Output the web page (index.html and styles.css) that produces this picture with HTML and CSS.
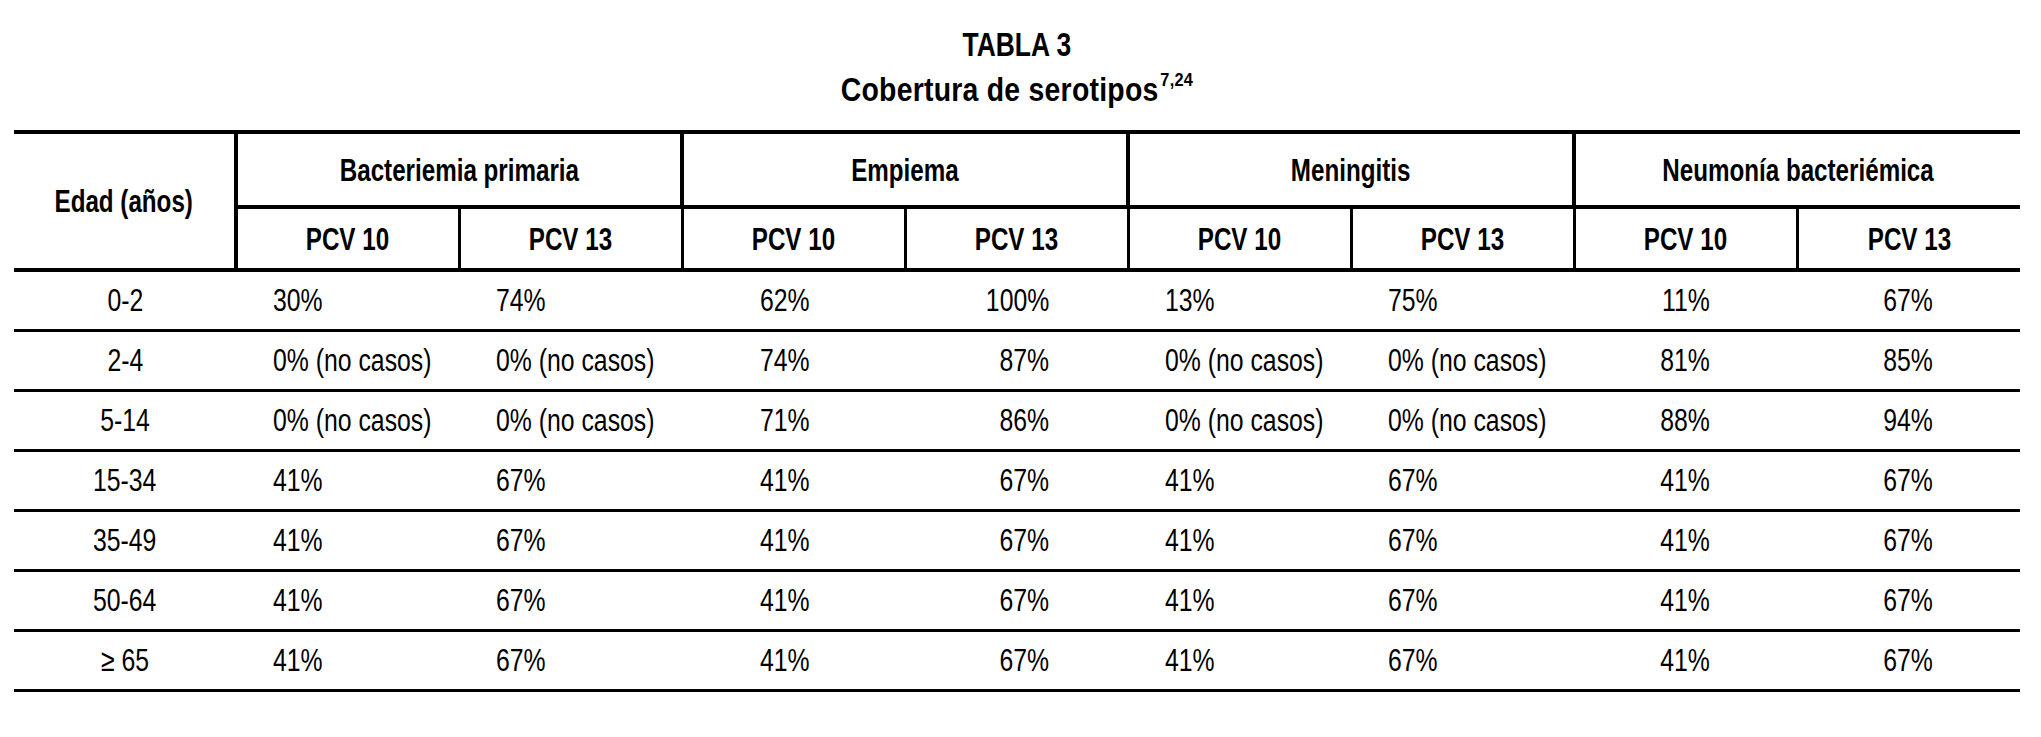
FILE: index.html
```html
<!DOCTYPE html>
<html lang="es">
<head>
<meta charset="utf-8">
<title>Tabla 3</title>
<link rel="stylesheet" href="styles.css">
</head>
<body>
<div class="page">
  <div class="caption">
    <div class="cap-line cap-num"><span class="sq">TABLA 3</span></div>
    <div class="cap-line cap-title"><span class="sq">Cobertura de serotipos<sup class="ref">7,24</sup></span></div>
  </div>
  <table class="tbl">
    <colgroup>
      <col class="col-age">
      <col class="col-v"><col class="col-v"><col class="col-v"><col class="col-v">
      <col class="col-v"><col class="col-v"><col class="col-v"><col class="col-v">
    </colgroup>
    <thead>
      <tr class="hrow1">
        <th rowspan="2" class="th-age"><span class="sq">Edad (años)</span></th>
        <th colspan="2" class="th-grp"><span class="sq">Bacteriemia primaria</span></th>
        <th colspan="2" class="th-grp"><span class="sq">Empiema</span></th>
        <th colspan="2" class="th-grp"><span class="sq">Meningitis</span></th>
        <th colspan="2" class="th-grp"><span class="sq">Neumonía bacteriémica</span></th>
      </tr>
      <tr class="hrow2">
        <th class="th-sub"><span class="sq">PCV 10</span></th>
        <th class="th-sub"><span class="sq">PCV 13</span></th>
        <th class="th-sub"><span class="sq">PCV 10</span></th>
        <th class="th-sub"><span class="sq">PCV 13</span></th>
        <th class="th-sub"><span class="sq">PCV 10</span></th>
        <th class="th-sub"><span class="sq">PCV 13</span></th>
        <th class="th-sub"><span class="sq">PCV 10</span></th>
        <th class="th-sub"><span class="sq">PCV 13</span></th>
      </tr>
    </thead>
    <tbody>
      <tr>
        <td class="c"><span class="sq">0-2</span></td>
        <td class="l"><span class="sq">30%</span></td>
        <td class="l"><span class="sq">74%</span></td>
        <td class="lw"><span class="sq">62%</span></td>
        <td class="rw"><span class="sq">100%</span></td>
        <td class="l"><span class="sq">13%</span></td>
        <td class="l"><span class="sq">75%</span></td>
        <td class="c"><span class="sq">11%</span></td>
        <td class="c"><span class="sq">67%</span></td>
      </tr>
      <tr>
        <td class="c"><span class="sq">2-4</span></td>
        <td class="l"><span class="sq">0% (no casos)</span></td>
        <td class="l"><span class="sq">0% (no casos)</span></td>
        <td class="lw"><span class="sq">74%</span></td>
        <td class="rw"><span class="sq">87%</span></td>
        <td class="l"><span class="sq">0% (no casos)</span></td>
        <td class="l"><span class="sq">0% (no casos)</span></td>
        <td class="c"><span class="sq">81%</span></td>
        <td class="c"><span class="sq">85%</span></td>
      </tr>
      <tr>
        <td class="c"><span class="sq">5-14</span></td>
        <td class="l"><span class="sq">0% (no casos)</span></td>
        <td class="l"><span class="sq">0% (no casos)</span></td>
        <td class="lw"><span class="sq">71%</span></td>
        <td class="rw"><span class="sq">86%</span></td>
        <td class="l"><span class="sq">0% (no casos)</span></td>
        <td class="l"><span class="sq">0% (no casos)</span></td>
        <td class="c"><span class="sq">88%</span></td>
        <td class="c"><span class="sq">94%</span></td>
      </tr>
      <tr>
        <td class="c"><span class="sq">15-34</span></td>
        <td class="l"><span class="sq">41%</span></td>
        <td class="l"><span class="sq">67%</span></td>
        <td class="lw"><span class="sq">41%</span></td>
        <td class="rw"><span class="sq">67%</span></td>
        <td class="l"><span class="sq">41%</span></td>
        <td class="l"><span class="sq">67%</span></td>
        <td class="c"><span class="sq">41%</span></td>
        <td class="c"><span class="sq">67%</span></td>
      </tr>
      <tr>
        <td class="c"><span class="sq">35-49</span></td>
        <td class="l"><span class="sq">41%</span></td>
        <td class="l"><span class="sq">67%</span></td>
        <td class="lw"><span class="sq">41%</span></td>
        <td class="rw"><span class="sq">67%</span></td>
        <td class="l"><span class="sq">41%</span></td>
        <td class="l"><span class="sq">67%</span></td>
        <td class="c"><span class="sq">41%</span></td>
        <td class="c"><span class="sq">67%</span></td>
      </tr>
      <tr>
        <td class="c"><span class="sq">50-64</span></td>
        <td class="l"><span class="sq">41%</span></td>
        <td class="l"><span class="sq">67%</span></td>
        <td class="lw"><span class="sq">41%</span></td>
        <td class="rw"><span class="sq">67%</span></td>
        <td class="l"><span class="sq">41%</span></td>
        <td class="l"><span class="sq">67%</span></td>
        <td class="c"><span class="sq">41%</span></td>
        <td class="c"><span class="sq">67%</span></td>
      </tr>
      <tr>
        <td class="c"><span class="sq">≥ 65</span></td>
        <td class="l"><span class="sq">41%</span></td>
        <td class="l"><span class="sq">67%</span></td>
        <td class="lw"><span class="sq">41%</span></td>
        <td class="rw"><span class="sq">67%</span></td>
        <td class="l"><span class="sq">41%</span></td>
        <td class="l"><span class="sq">67%</span></td>
        <td class="c"><span class="sq">41%</span></td>
        <td class="c"><span class="sq">67%</span></td>
      </tr>
    </tbody>
  </table>
</div>
</body>
</html>
```

FILE: styles.css
```css
html, body {
  margin: 0;
  padding: 0;
  background: #ffffff;
}

body {
  font-family: "Liberation Sans", Arial, sans-serif;
  color: #000000;
}

.page {
  width: 2006px;
  padding: 25px 0 0 14px;
}

.sq {
  display: inline-block;
  white-space: nowrap;
  transform: scaleX(0.78);
  transform-origin: center;
}

/* caption */
.caption {
  text-align: center;
  font-weight: 700;
  height: 105px;
}

.cap-line {
  font-size: 33px;
  line-height: 40px;
}

.cap-num .sq {
  transform: scaleX(0.8);
}

.cap-title {
  margin-top: 5px;
}

.cap-title .sq {
  transform: scaleX(0.86);
  letter-spacing: 0.3px;
}

.ref {
  font-size: 19px;
  font-weight: 700;
  vertical-align: 0;
  position: relative;
  top: -15px;
  margin-left: 2px;
}

/* table */
.tbl {
  width: 2006px;
  border-collapse: collapse;
  table-layout: fixed;
  border-top: 4px solid #000;
}

.col-age {
  width: 222px;
}

.col-v {
  width: 223px;
}

th {
  font-weight: 700;
  font-size: 31px;
  text-align: center;
  padding: 0;
}

.hrow1 th {
  height: 68px;
}

.hrow2 th {
  height: 57px;
  border-bottom: 4px solid #000;
}

.th-age {
  border-right: 4px solid #000;
  border-bottom: 4px solid #000;
  vertical-align: middle;
  padding-top: 2px;
}

.th-grp {
  border-left: 4px solid #000;
  border-bottom: 4px solid #000;
  padding-top: 3px;
}

.th-sub {
  border-left: 3px solid #000;
  padding-top: 2px;
}

td {
  font-size: 31px;
  height: 57px;
  padding: 0;
  border-bottom: 3px solid #000;
  vertical-align: middle;
}

td .sq {
  transform: scaleX(0.8);
}

td.c {
  text-align: center;
}

td.l {
  text-align: left;
  padding-left: 37px;
}

td.l .sq,
td.lw .sq {
  transform-origin: left center;
}

td.lw {
  text-align: left;
  padding-left: 78px;
}

td.rw {
  text-align: right;
  padding-right: 79px;
}

td.rw .sq {
  transform-origin: right center;
}
```
